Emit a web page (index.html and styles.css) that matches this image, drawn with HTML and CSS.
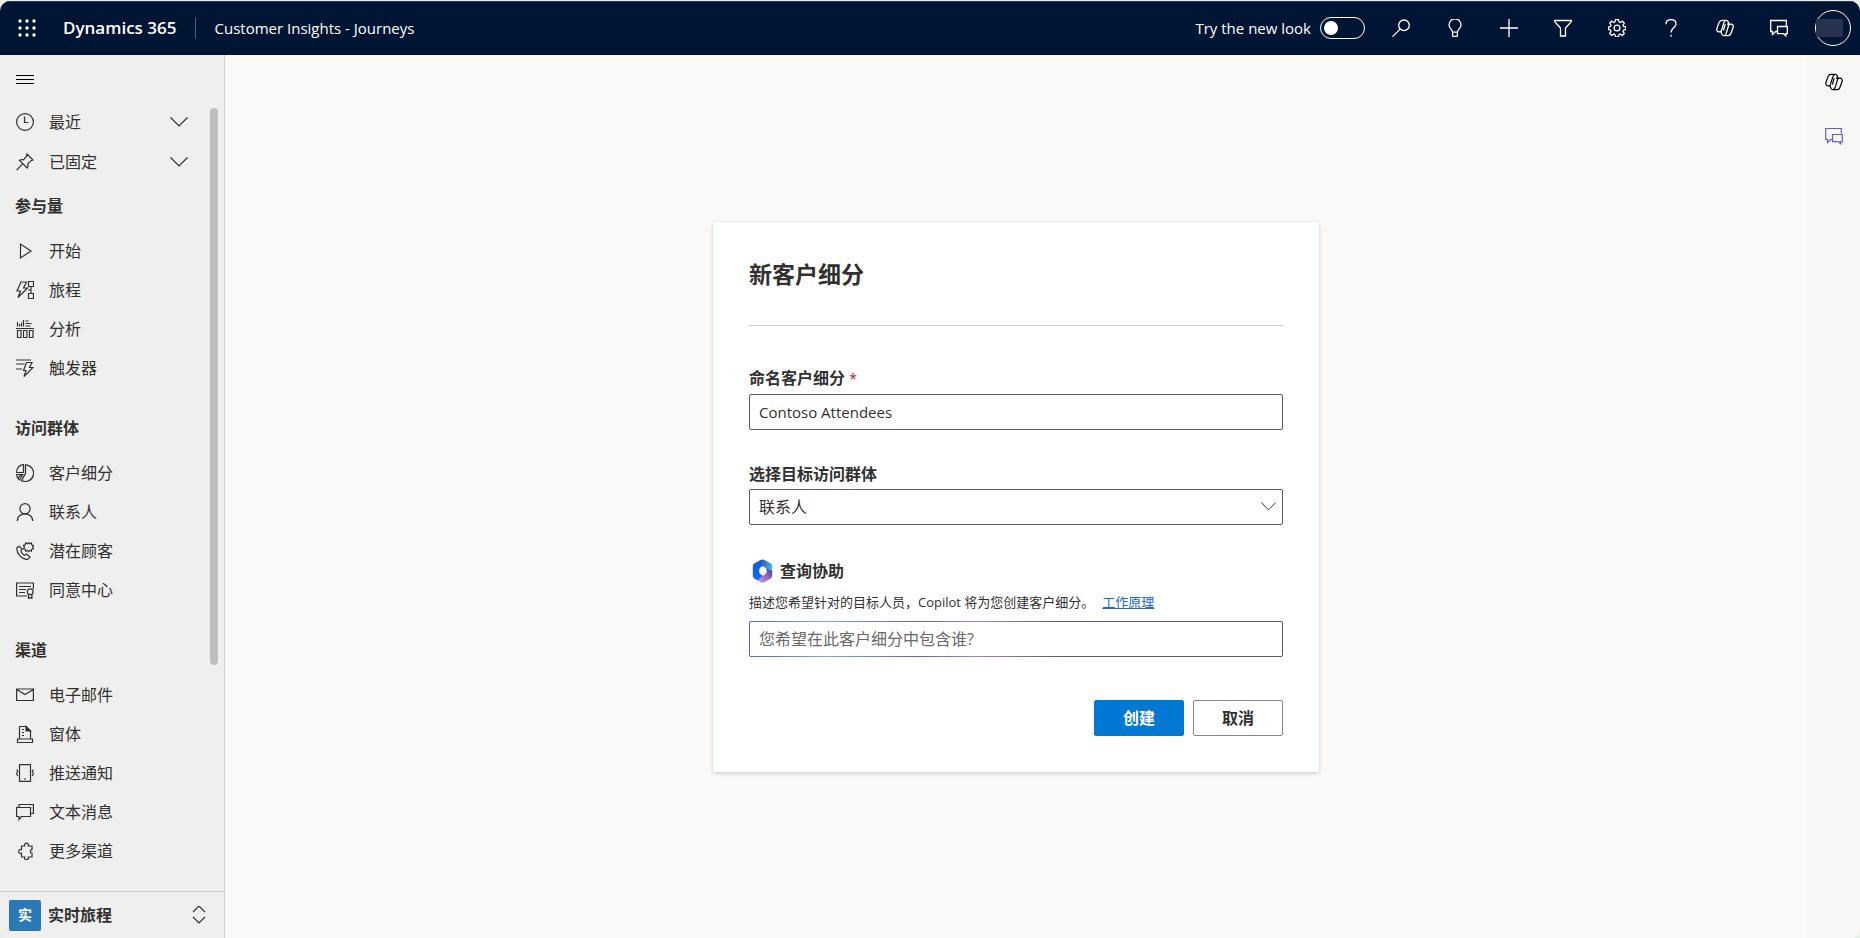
FILE: index.html
```html
<!DOCTYPE html>
<html lang="zh-CN">
<head>
<meta charset="utf-8">
<meta name="viewport" content="width=device-width, initial-scale=1">
<title>Customer Insights - Journeys</title>
<link rel="stylesheet" href="styles.css">
</head>
<body>
<svg class="sprite" aria-hidden="true">
  <symbol id="waffle" viewBox="0 0 18 18"><g fill="currentColor"><circle cx="2" cy="2" r="1.7"/><circle cx="9" cy="2" r="1.7"/><circle cx="16" cy="2" r="1.7"/><circle cx="2" cy="9" r="1.7"/><circle cx="9" cy="9" r="1.7"/><circle cx="16" cy="9" r="1.7"/><circle cx="2" cy="16" r="1.7"/><circle cx="9" cy="16" r="1.7"/><circle cx="16" cy="16" r="1.7"/></g></symbol>
  <symbol id="menu" viewBox="0 0 18 18"><path d="M0 4.5h18M0 8.5h18M0 12.5h18"/></symbol>
  <symbol id="search" viewBox="0 0 18 18"><circle cx="12" cy="6.3" r="5.3"/><path d="M8.2 10.1.5 17.6"/></symbol>
  <symbol id="bulb" viewBox="0 0 18 18"><path d="M6.6 13.2c0-2.4-3.6-4-3.6-7.3a6 6 0 0 1 12 0c0 3.300-3.600 4.900-3.600 7.300zM6.600 13.200v3.300a1 1 0 0 0 1 1h2.800a1 1 0 0 0 1-1v-3.300"/></symbol>
  <symbol id="plus" viewBox="0 0 18 18"><path d="M9 0v18M0 9h18"/></symbol>
  <symbol id="filter" viewBox="0 0 18 18"><path d="M.8 1.500h16.400v1.200L11.500 9v8H6.500V9L.8 2.700z"/></symbol>
  <symbol id="gear" viewBox="0 0 18 18"><circle cx="9" cy="9" r="2.900"/><path d="M7.500.6h3l.5 2.300 1.300.6 2-1.300 2 2-1.300 2 .6 1.300 2.300.5v2.600l-2.300.5-.6 1.300 1.300 2-2 2-2-1.300-1.300.6-.5 2.300h-3L7 15.700l-1.300-.6-2 1.300-2-2 1.300-2-.6-1.300L.6 10.600V8l1.800-.5.6-1.300-1.300-2 2-2 2 1.300L7 2.900z"/></symbol>
  <symbol id="help" viewBox="0 0 18 18"><path d="M4 5.200C4 2.400 6 .6 9 .6s5 1.700 5 4.300c0 3.700-5 4.300-5 8.600M9 15.700v2"/></symbol>
  <symbol id="copilot" viewBox="0 0 18 18"><path d="M13 5.200 12.300 3C11.900 1.800 11.200 1.300 10 1.300H5.900C4.500 1.300 3.600 2 3.100 3.400L1 9.300c-.7 2 .2 3.500 2.100 3.500h2M5 12.700l.7 2.200c.4 1.200 1.100 1.700 2.200 1.700h4.200c1.400 0 2.300-.7 2.800-2.100L17 8.700c.7-2-.2-3.500-2.100-3.500h-4M9.900 1.300C8.600 1.500 8.300 2.400 7.900 3.600L5.600 11.200c-.3 1-.9 1.600-2.300 1.600M8.300 16.600c1.200-.2 1.500-1.100 1.900-2.300l2.300-7.600c.3-1 .9-1.500 2.300-1.500M9.200 5.200 7.400 11.500"/></symbol>
  <symbol id="chat" viewBox="0 0 18 18"><path d="M7 12.500H5.700L2.500 15.500v-3H.7v-11h15.600v5M7.500 7.500h9.800v7.200h-1.500v2.100l-2.200-2.100H7.500z"/></symbol>
  <symbol id="clock" viewBox="0 0 18 18"><circle cx="9" cy="9" r="8.400"/><path d="M8.500 3.500v6h4"/></symbol>
  <symbol id="pin" viewBox="0 0 18 18"><path d="M11 1 17 7l-2 .7-3.300 3.300c.5 1.500.2 2.800-.5 4L3.500 7.300c1.200-.7 2.500-.9 3.900-.5l3-3.300zM6.800 10.700.6 17.200"/></symbol>
  <symbol id="play" viewBox="0 0 18 18"><path d="M4.500 2v14l10.500-7z"/></symbol>
  <symbol id="journey" viewBox="0 0 18 18"><path d="M5 1h5.500L7.500 7h4L2 16.500 4.500 10H1zM12.500.5h5v5h-5zM12.500 12.500h5v5h-5zM15 5.500v7M12 9h3"/></symbol>
  <symbol id="analytics" viewBox="0 0 18 18"><path d="M1.500 2v4.500M3.500 4v2.500M5.500 2.500v4M7.500 0v6.500M9.500 1h3M9.500 3.500h6M9.500 6h5M0 8.500h18M1.500 10.500h3.500v7h-3.500zM7.500 10.500h3.500v7h-3.500zM13.500 10.500h3.500v7h-3.500z"/></symbol>
  <symbol id="trigger" viewBox="0 0 18 18"><path d="M0 1h15M0 5h8.500M0 10h6M10.500 3.500H16l-2.500 5H17L8 17.500l2-6H7.500z"/></symbol>
  <symbol id="segment" viewBox="0 0 18 18"><path d="M9.500.9a8.300 8.300 0 1 1-4 15.700L9.500 9.500zM7.500.6v7.900H.6C.8 4.200 3.500 1 7.500.6zM.6 10.500h6.200L3.500 16A7 7 0 0 1 .6 10.500zM2 14l3.500-3.500"/></symbol>
  <symbol id="person" viewBox="0 0 18 18"><circle cx="9" cy="5.700" r="5.100"/><path d="M1.300 18c0-4.300 3.200-7.200 7.700-7.200s7.700 2.900 7.700 7.200"/></symbol>
  <symbol id="lead" viewBox="0 0 18 18"><path d="M3 4.300 1 5.700C-.2 11.300 6.300 18 12 17.200l2-2.100-3.400-3-2 1.300c-1.800-.8-3.200-2.600-3.800-4.600l1.500-1.500zM12.500.6l1.200 1.200L15.400 1l.3 1.900 1.800.5-.9 1.700.9 1.600-1.800.6-.3 1.900-1.700-.8-1.200 1.200-1.200-1.200-1.700.8-.3-1.900-1.800-.6.900-1.600-.9-1.700 1.800-.5L9.600 1l1.700.8z"/></symbol>
  <symbol id="consent" viewBox="0 0 18 18"><path d="M11 15H.6V2h16.800v6M3 5.500h12M3 8.500h7M3 11.500h6"/><circle cx="14.200" cy="10.700" r="2.900"/><path d="M12.500 13v4.500l1.700-1 1.700 1V13"/></symbol>
  <symbol id="mail" viewBox="0 0 18 18"><path d="M.6 3h16.800v11.500H.6zM.6 3.500 9 8.500l8.400-5"/></symbol>
  <symbol id="form" viewBox="0 0 18 18"><path d="M3.500 14V1.500H10L14.500 6v8M1.500 14h15v3.500h-15zM6 4.500h2M6 7.500h2M6 10.500h2"/><path d="M10 1.500V6h4.500z" fill="currentColor"/></symbol>
  <symbol id="push" viewBox="0 0 18 18"><path d="M3.500.6h11v16.800h-11zM8 15h2M.5 5.500l1.300 2L.5 9.500l1.300 2.500M17.500 5.500l-1.300 2 1.300 2-1.300 2.500"/></symbol>
  <symbol id="sms" viewBox="0 0 18 18"><path d="M.6 4.500h13.900v9H5.500l-2.500 3v-3H.6zM3 4.500V1.500h14.400v9h-2.900"/></symbol>
  <symbol id="puzzle" viewBox="0 0 18 18"><path d="M5.500 4h3.200a2 2 0 1 1 3.600 0h3.700v3.700a1.700 1.700 0 1 0 0 3.400V15h-3.700a2 2 0 1 1-3.600 0H5.500v-3.700a2 2 0 1 1 0-3.600z"/></symbol>
  <symbol id="down" viewBox="0 0 18 18"><path d="m.5 4.500 8.500 8.500 8.500-8.500"/></symbol>
  <symbol id="updown" viewBox="0 0 18 18"><path d="M3 6 9 0l6 6M3 11l6 6 6-6"/></symbol>
</svg>

<div class="app">
  <header class="topbar">
    <button class="waffle" aria-label="应用启动器"><svg class="icon"><use href="#waffle"/></svg></button>
    <a class="brand" href="#">Dynamics 365</a>
    <a class="product" href="#">Customer Insights - Journeys</a>
    <label class="newlook">Try the new look <input class="switch" type="checkbox" role="switch"></label>
    <button class="tool" aria-label="搜索"><svg class="icon"><use href="#search"/></svg></button>
    <button class="tool" aria-label="提示"><svg class="icon"><use href="#bulb"/></svg></button>
    <button class="tool" aria-label="新建"><svg class="icon"><use href="#plus"/></svg></button>
    <button class="tool" aria-label="筛选"><svg class="icon"><use href="#filter"/></svg></button>
    <button class="tool" aria-label="设置"><svg class="icon"><use href="#gear"/></svg></button>
    <button class="tool" aria-label="帮助"><svg class="icon"><use href="#help"/></svg></button>
    <button class="tool" aria-label="Copilot"><svg class="icon"><use href="#copilot"/></svg></button>
    <button class="tool" aria-label="聊天"><svg class="icon"><use href="#chat"/></svg></button>
    <button class="tool" aria-label="帐户"><span class="avatar"><span class="avatar-name"></span></span></button>
  </header>

  <div class="body">
    <nav class="sidebar">
      <button class="hamburger" aria-label="菜单"><svg class="icon"><use href="#menu"/></svg></button>
      <div class="nav-scroll">
        <button class="nav-item nav-fold"><svg class="icon"><use href="#clock"/></svg><span>最近</span><svg class="icon fold"><use href="#down"/></svg></button>
        <button class="nav-item nav-fold"><svg class="icon"><use href="#pin"/></svg><span>已固定</span><svg class="icon fold"><use href="#down"/></svg></button>

        <section class="group">
          <h2 class="group-title">参与量</h2>
          <a class="nav-item" href="#"><svg class="icon"><use href="#play"/></svg><span>开始</span></a>
          <a class="nav-item" href="#"><svg class="icon"><use href="#journey"/></svg><span>旅程</span></a>
          <a class="nav-item" href="#"><svg class="icon"><use href="#analytics"/></svg><span>分析</span></a>
          <a class="nav-item" href="#"><svg class="icon"><use href="#trigger"/></svg><span>触发器</span></a>
        </section>
        <section class="group">
          <h2 class="group-title">访问群体</h2>
          <a class="nav-item" href="#"><svg class="icon"><use href="#segment"/></svg><span>客户细分</span></a>
          <a class="nav-item" href="#"><svg class="icon"><use href="#person"/></svg><span>联系人</span></a>
          <a class="nav-item" href="#"><svg class="icon"><use href="#lead"/></svg><span>潜在顾客</span></a>
          <a class="nav-item" href="#"><svg class="icon"><use href="#consent"/></svg><span>同意中心</span></a>
        </section>
        <section class="group">
          <h2 class="group-title">渠道</h2>
          <a class="nav-item" href="#"><svg class="icon"><use href="#mail"/></svg><span>电子邮件</span></a>
          <a class="nav-item" href="#"><svg class="icon"><use href="#form"/></svg><span>窗体</span></a>
          <a class="nav-item" href="#"><svg class="icon"><use href="#push"/></svg><span>推送通知</span></a>
          <a class="nav-item" href="#"><svg class="icon"><use href="#sms"/></svg><span>文本消息</span></a>
          <a class="nav-item" href="#"><svg class="icon"><use href="#puzzle"/></svg><span>更多渠道</span></a>
        </section>
        <div class="scroll-thumb"></div>
      </div>
      <button class="area-switch"><span class="badge">实</span><span class="area-name">实时旅程</span><svg class="icon"><use href="#updown"/></svg></button>
    </nav>

    <main class="stage">
      <form class="card">
        <h1 class="card-title">新客户细分</h1>

        <label class="label" for="segment-name">命名客户细分 <span class="required">*</span></label>
        <input class="field" id="segment-name" type="text" value="Contoso Attendees">

        <label class="label" for="audience">选择目标访问群体</label>
        <div class="select-wrap">
          <select class="field" id="audience"><option>联系人</option></select>
          <svg class="icon select-arrow"><use href="#down"/></svg>
        </div>

        <div class="assist">
          <svg class="assist-logo" viewBox="0 0 22 26" aria-hidden="true">
            <defs>
              <linearGradient id="lg-cyan" x1="0" y1="0" x2="1" y2="1"><stop offset="0" stop-color="#2b4fb0"/><stop offset="1" stop-color="#4fd0fa"/></linearGradient>
              <linearGradient id="lg-violet" x1="0" y1="1" x2="1" y2="0"><stop offset="0" stop-color="#d49bf0"/><stop offset="1" stop-color="#553c90"/></linearGradient>
              <linearGradient id="lg-blue" x1="0" y1="0" x2="0" y2="1"><stop offset="0" stop-color="#1556d8"/><stop offset="1" stop-color="#0a6cff"/></linearGradient>
            </defs>
            <path d="M9 1q2-1 4 0l7 4q1.500 1 1.500 3v8l-6-4-3-3.500L9 8z" fill="url(#lg-cyan)"/>
            <path d="M21.500 13v5q0 2-1.500 3l-7 4.200q-2 1-4 0L5 22.500l4-4.500 4-.5 2.500-3v-4z" fill="url(#lg-violet)"/>
            <path d="M9.500.8V8.500L7.500 11v4l3 3.200L6 23.300l-4-2.300q-1.500-1-1.500-3V8q0-2 1.500-3z" fill="url(#lg-blue)"/>
            <ellipse cx="11.500" cy="13" rx="3.500" ry="4.200" fill="#fff"/>
          </svg>
          <label class="assist-title" for="query">查询协助</label>
        </div>
        <p class="hint">描述您希望针对的目标人员，Copilot 将为您创建客户细分。<a class="hint-link" href="#">工作原理</a></p>
        <input class="field field-ai" id="query" type="text" placeholder="您希望在此客户细分中包含谁?">

        <div class="actions">
          <button class="btn btn-primary" type="button">创建</button>
          <button class="btn" type="button">取消</button>
        </div>
      </form>
    </main>

    <aside class="rail">
      <button class="rail-btn" aria-label="Copilot"><svg class="icon"><use href="#copilot"/></svg></button>
      <button class="rail-btn rail-chat" aria-label="聊天"><svg class="icon"><use href="#chat"/></svg></button>
    </aside>
  </div>
</div>
</body>
</html>
```
FILE: styles.css
```css
* { box-sizing: border-box; }

body {
  margin: 0;
  background: #e8efe6;
  color: #323130;
  font: 16px/24px "Open Sans", "Noto Sans CJK SC", sans-serif;
}

button, input, select { font: inherit; color: inherit; }
button { padding: 0; border: 0; background: none; }
a { color: inherit; text-decoration: none; }
.sprite { display: none; }

.icon {
  display: block;
  flex: none;
  width: 18px;
  height: 18px;
  fill: none;
  stroke: currentColor;
  stroke-width: 1.2;
}

.app {
  display: flex;
  flex-direction: column;
  height: calc(100vh - 1px);
  margin-top: 1px;
  overflow: hidden;
  border-radius: 10px 10px 8px 8px;
}

/* Top bar */
.topbar {
  display: flex;
  flex: none;
  align-items: center;
  height: 54px;
  padding-bottom: 1px;
  border-top: 1px solid #2a3c52;
  background: #001433;
  color: #fff;
  font-size: 15px;
}
.topbar .icon { stroke-width: 1.3; }
.waffle { display: grid; place-items: center; width: 53px; height: 52px; }
.topbar .waffle .icon { stroke: none; }
.brand {
  margin-left: 10px;
  padding-right: 19px;
  border-right: 1px solid #4a5870;
  font-size: 17px;
  font-weight: 600;
  line-height: 22px;
}
.product { margin-left: 18px; }
.newlook { display: flex; align-items: center; gap: 9px; margin: 0 9px 0 auto; }
.switch {
  appearance: none;
  width: 45px;
  height: 22px;
  margin: 0;
  border: 1px solid #fff;
  border-radius: 11px;
}
.switch::before {
  content: "";
  display: block;
  width: 14px;
  height: 14px;
  margin: 3px;
  border-radius: 50%;
  background: #fff;
}
.tool { display: grid; place-items: center; width: 54px; height: 52px; }
.avatar {
  display: flex;
  align-items: center;
  width: 36px;
  height: 36px;
  border: 1px solid #fff;
  border-radius: 50%;
}
.avatar-name { width: 27px; height: 18px; background: #26344f; }

.body { display: flex; flex: 1; min-height: 0; }

/* Side navigation */
.sidebar {
  display: flex;
  flex: none;
  flex-direction: column;
  width: 225px;
  border-right: 1px solid #d2d0ce;
  background: #efefef;
}
.hamburger { flex: none; height: 47px; padding: 2px 0 0 16px; color: #000; }
.nav-scroll { position: relative; flex: 1; min-height: 0; overflow: hidden; }
.nav-item {
  display: flex;
  align-items: center;
  gap: 15px;
  width: 100%;
  height: 39px;
  padding: 0 36px 0 16px;
  text-align: left;
}
.nav-fold { height: 40px; }
.fold { margin-left: auto; }
.group { padding-bottom: 17px; }
.group-title {
  margin: 0;
  padding: 12px 15px 13px;
  font-size: 16px;
  font-weight: 600;
  line-height: 24px;
}
.scroll-thumb {
  position: absolute;
  top: 6px;
  right: 6px;
  width: 8px;
  height: 557px;
  border-radius: 4px;
  background: #bebebe;
}
.area-switch {
  display: flex;
  flex: none;
  align-items: center;
  gap: 7px;
  height: 47px;
  padding: 0 16px 0 9px;
  border-top: 1px solid #d2d0ce;
  text-align: left;
}
.badge {
  width: 32px;
  height: 31px;
  border-radius: 2px;
  background: #2a78b5;
  color: #fff;
  font-size: 14px;
  font-weight: 600;
  line-height: 29px;
  text-align: center;
}
.area-name { flex: 1; font-weight: 600; }

/* Form card */
.stage {
  display: grid;
  flex: 1;
  place-items: center;
  background: #faf9f8;
}
.card {
  display: flex;
  flex-direction: column;
  width: 606px;
  padding: 36px;
  border-radius: 2px;
  background: #fff;
  box-shadow: 0 2px 4px rgba(0, 0, 0, .13), 0 0 2px rgba(0, 0, 0, .11);
}
.card-title {
  margin: 0 0 40px;
  padding-bottom: 35px;
  border-bottom: 1px solid #c8c8c8;
  font-size: 23px;
  font-weight: 600;
  line-height: 32px;
}
.label { padding-bottom: 3px; font-weight: 600; }
.required { color: #a4262c; font-size: 14px; font-weight: 400; }
.field {
  width: 100%;
  height: 36px;
  margin: 0 0 32px;
  padding: 0 9px;
  border: 1px solid #605e5c;
  border-radius: 2px;
  background: #fff;
  font-size: 15px;
}
select.field { appearance: none; margin: 0; font-size: 16px; }
.select-wrap { position: relative; margin-bottom: 34px; }
.select-arrow {
  position: absolute;
  top: 10px;
  right: 7px;
  width: 15px;
  height: 15px;
  pointer-events: none;
}
.assist { display: flex; align-items: center; gap: 7px; padding-left: 3px; }
.assist-logo { width: 21px; height: 24px; }
.assist-title { font-weight: 600; }
.hint { margin: 6px 0; font-size: 13px; line-height: 26px; }
.hint-link { margin-left: 8px; color: #2266e3; text-decoration: underline; }
.field-ai {
  margin-bottom: 43px;
  border-color: transparent;
  background:
    linear-gradient(#fff, #fff) padding-box,
    linear-gradient(90deg, #4f6bb0 0, #7aa5f0 14%, #6f5ad0 32%, #a083e0 42%, #605e5c 58%) border-box;
  font-size: 16px;
}
.field-ai::placeholder { color: #6b6967; opacity: 1; }
.actions { display: flex; justify-content: flex-end; gap: 9px; }
.btn {
  width: 90px;
  height: 36px;
  border: 1px solid #8a8886;
  border-radius: 2px;
  background: #fff;
  font-weight: 600;
}
.btn-primary { border-color: #0078d4; background: #0078d4; color: #fff; }

/* Right rail */
.rail { flex: none; width: 53px; background: #f8f7f6; }
.rail-btn { display: grid; place-items: center; width: 100%; height: 54px; color: #000; }
.rail-chat { color: #5b5fc7; }
```
